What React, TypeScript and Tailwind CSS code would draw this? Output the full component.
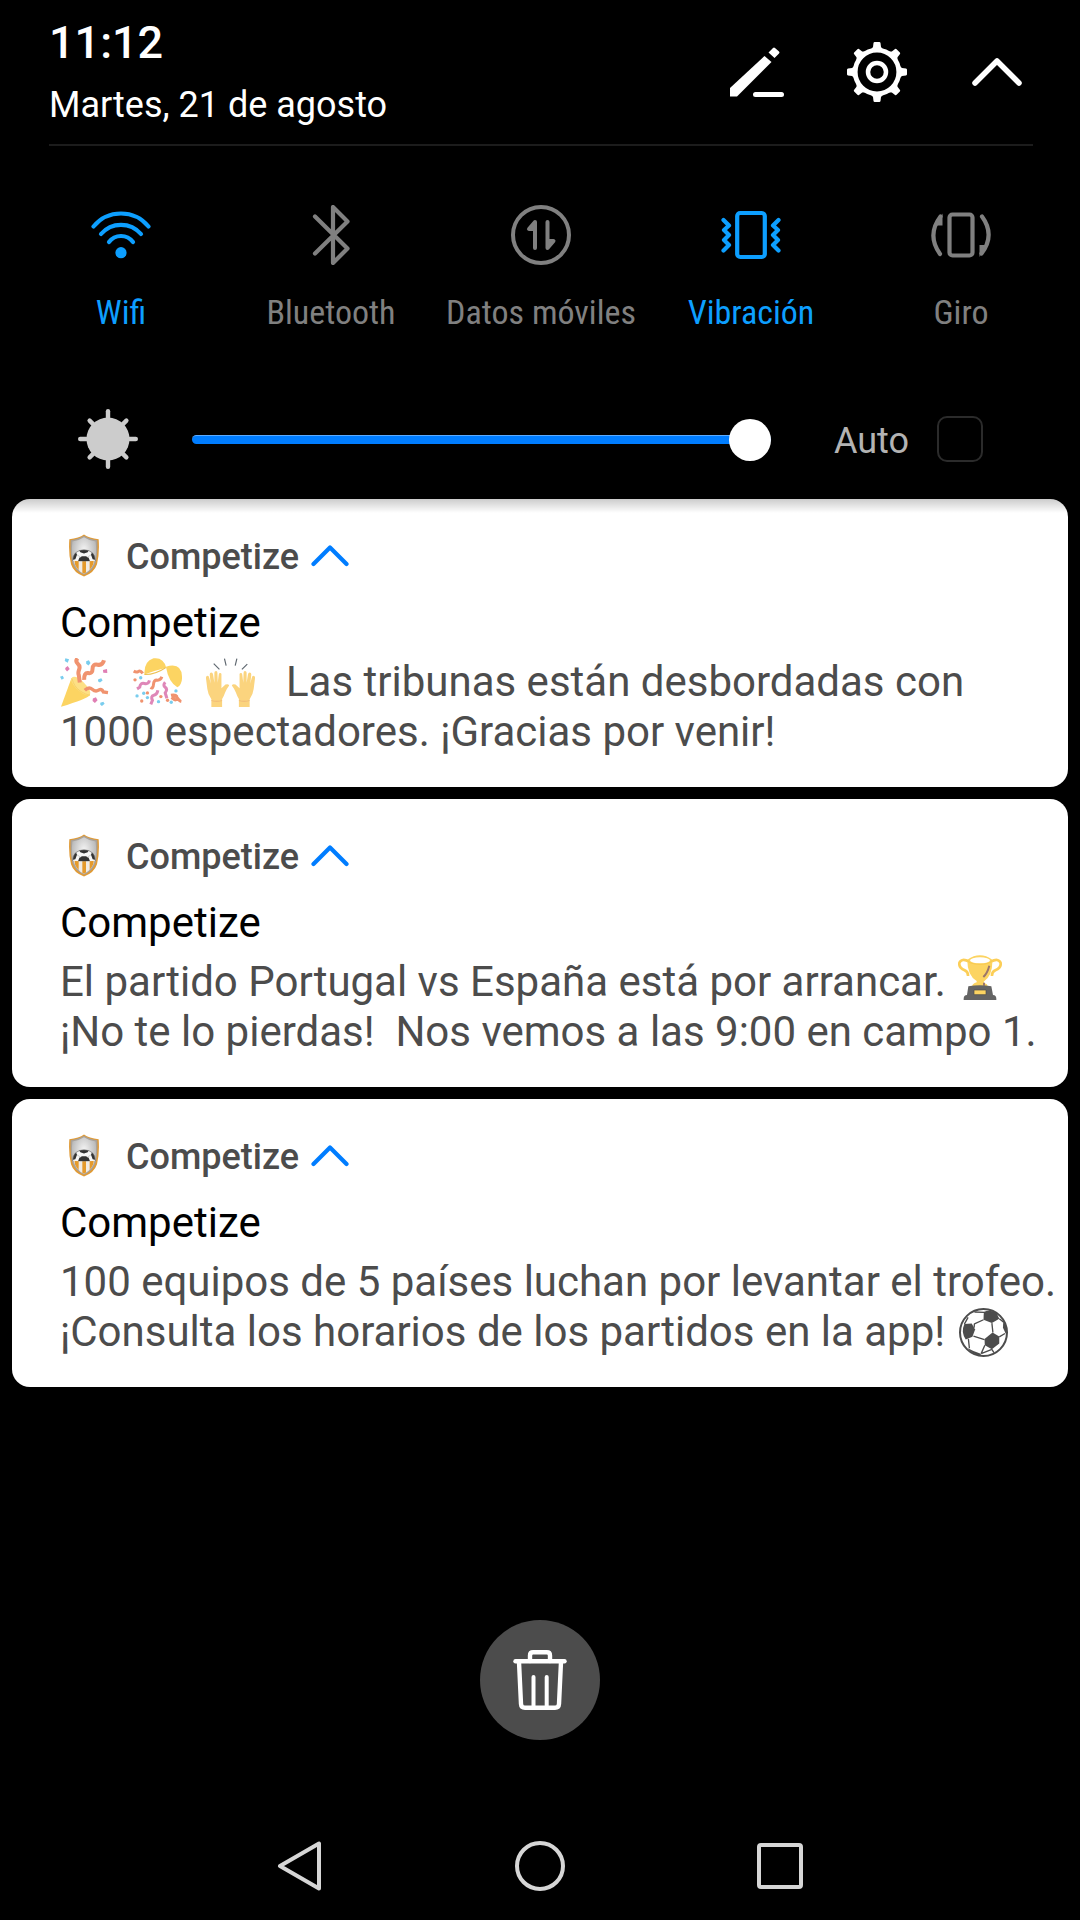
import type { ReactNode } from "react";

const TEETH = [0, 45, 90, 135, 180, 225, 270, 315];

const PencilIcon = () => (
  <svg viewBox="0 0 60 60" className="size-[60px]" fill="currentColor">
    <path d="M3 48v-2L37.5 14l7 6L10 54.5H3z" />
    <path d="M41.5 10.5l4.500-4.500q1-1 2 0l4 3.500q1 1 0 2l-4.500 4.500z" />
    <path d="M28.500 52.500H54.500" stroke="currentColor" strokeWidth="5" strokeLinecap="round" />
  </svg>
);

const GearIcon = () => (
  <svg viewBox="0 0 60 60" className="size-[60px]" fill="none" stroke="currentColor">
    <circle cx="30" cy="30" r="21.800" strokeWidth="4.800" />
    <circle cx="30" cy="30" r="9" strokeWidth="4.500" />
    {TEETH.map((a) => (
      <path
        key={a}
        d="M23 8.500L26 5l.500-4q.200-1 1.200-1h4.600q1 0 1.200 1l.500 4 3 3.500z"
        fill="currentColor"
        stroke="none"
        transform={`rotate(${a} 30 30)`}
      />
    ))}
  </svg>
);

const CollapseIcon = () => (
  <svg viewBox="0 0 60 60" className="size-[60px]" fill="none" stroke="currentColor" strokeWidth="5.500" strokeLinecap="round" strokeLinejoin="round">
    <path d="M8 41L30 19l22 22" />
  </svg>
);

const WifiIcon = () => (
  <svg viewBox="0 0 60 60" className="size-[60px]" fill="none" stroke="currentColor" strokeWidth="4.200" strokeLinecap="round">
    <path d="M2.500 21.500a35.600 35.600 0 0 1 55 0" />
    <path d="M10 29a26.300 26.300 0 0 1 40 0" />
    <path d="M18 37a15 15 0 0 1 24 0" />
    <circle cx="30" cy="47.700" r="5.600" fill="currentColor" stroke="none" />
  </svg>
);

const BluetoothIcon = () => (
  <svg viewBox="0 0 60 60" className="size-[60px]" fill="none" stroke="currentColor" strokeWidth="4.200" strokeLinecap="round" strokeLinejoin="round">
    <path d="M14 11.500L46.500 43.500 32 58V2l14.500 14.500L14 48.500" />
  </svg>
);

const DataIcon = () => (
  <svg viewBox="0 0 60 60" className="size-[60px]" fill="none" stroke="currentColor" strokeWidth="4" strokeLinecap="round" strokeLinejoin="round">
    <circle cx="30" cy="30" r="28" />
    <path d="M24 43V17l-6 7h6" fill="currentColor" />
    <path d="M36.500 17v26l6-7h-6" fill="currentColor" />
  </svg>
);

const VibrateIcon = () => (
  <svg viewBox="0 0 60 60" className="size-[60px]" fill="none" stroke="currentColor" strokeWidth="4.200" strokeLinecap="round" strokeLinejoin="round">
    <rect x="16.200" y="8" width="27.600" height="44" rx="3" />
    <path d="M2.500 15l5.500 5.500L3 25l5 5-5 5 5 5-5.500 5.500" />
    <path d="M57.500 15L52 20.500l5 4.500-5 5 5 5-5 5 5.500 5.500" />
  </svg>
);

const RotateIcon = () => (
  <svg viewBox="0 0 60 60" className="size-[60px]" fill="none" stroke="currentColor" strokeWidth="4.200" strokeLinecap="round" strokeLinejoin="round">
    <rect x="18.500" y="9.500" width="23" height="41" rx="3" />
    <path d="M9.500 11.500Q-4.500 30 9 49" />
    <path d="M51 11.500Q64.500 30 50.500 48.500" />
    <path d="M11.500 8.500v12H4.500z" fill="currentColor" stroke="none" />
    <path d="M48.500 52V40h7z" fill="currentColor" stroke="none" />
  </svg>
);

const SunIcon = () => (
  <svg viewBox="0 0 60 60" className="size-[60px] shrink-0 text-[#cccccc]" fill="currentColor">
    <circle cx="30" cy="30" r="21.500" />
    {TEETH.map((a) => (
      <path
        key={a}
        d={a % 90 ? "M30 10V4" : "M30 10V2.200"}
        stroke="currentColor"
        strokeWidth="4.400"
        strokeLinecap="round"
        transform={`rotate(${a} 30 30)`}
      />
    ))}
  </svg>
);

const TrashIcon = () => (
  <svg viewBox="0 0 60 60" className="size-[60px]" fill="none" stroke="currentColor" strokeWidth="4.400" strokeLinecap="round" strokeLinejoin="round">
    <path d="M5.500 11.200h49" />
    <path d="M20 11V5.500q0-3.200 3.200-3.200h13.600q3.200 0 3.200 3.200V11" />
    <path d="M9 12l2 42q.200 3.800 4 3.800h30q3.800 0 4-3.800l2-42" />
    <path d="M23.500 27v30M36.700 27v30" strokeWidth="4" />
  </svg>
);

const ShieldLogo = () => (
  <svg viewBox="0 0 90 128" className="mb-1 h-[43px] w-[30px]">
    <defs>
      <radialGradient id="steel" cx="50%" cy="35%" r="60%">
        <stop offset="0%" stopColor="#f4f4f4" />
        <stop offset="100%" stopColor="#b0b0b0" />
      </radialGradient>
      <clipPath id="stripes">
        <path d="M13 76H77Q72 106 45 119Q20 108 13 76z" />
      </clipPath>
      <clipPath id="ball">
        <path d="M11 80Q12 48 45 47Q78 48 79 80Q45 84 11 80z" />
      </clipPath>
    </defs>
    <path d="M45 1Q60 12 89 15Q92 60 84 90Q76 115 45 127Q14 115 6 90Q-2 60 1 15Q30 12 45 1z" fill="#e09a35" />
    <path d="M45 5Q61 15 85 18Q87 62 79 88Q72 110 45 122Q18 110 11 88Q3 62 5 18Q29 15 45 5z" fill="#a9a29a" />
    <path d="M45 9Q60 19 80 22Q84 60 76 86Q69 108 45 119Q21 108 14 86Q6 60 10 22Q30 19 45 9z" fill="url(#steel)" />
    <g clipPath="url(#stripes)">
      <path d="M8 76h76v50H8z" fill="#f1ebe4" />
      <path d="M17 76h12v50H17zM40 76h11v50H40zM62 76h12v50H62z" fill="#e59a2b" />
    </g>
    <g clipPath="url(#ball)">
      <path d="M8 44h74v42H8z" fill="#f7f7f7" />
      <path d="M28 44h34l-6 10-11 4-11-4z" fill="#333" />
      <path d="M8 56l13-2 3 8-5 13-11 3zM82 56l-13-2-3 8 5 13 11 3z" fill="#333" />
      <path d="M31 71l8-5h12l8 5 5 13H26z" fill="#333" />
      <path d="M24 62l11 7M66 62l-11 7" stroke="#bbb" strokeWidth="2" />
    </g>
    <path d="M11 80Q12 48 45 47Q78 48 79 80" fill="none" stroke="#666" strokeWidth="2" />
  </svg>
);

const ChevronUp = () => (
  <svg viewBox="0 0 38 24" className="mb-[2px] h-6 w-[38px] text-[#007dff]" fill="none" stroke="currentColor" strokeWidth="4.200" strokeLinecap="round" strokeLinejoin="round">
    <path d="M2.500 20L19 3.500 35.500 20" />
  </svg>
);

const PartyPopper = () => (
  <svg viewBox="0 0 146 146" className="size-[49px]" role="img" aria-label="Cañón de confeti">
    <path d="M3 145L34 60Q70 75 90 110Q80 122 3 145z" fill="#fcd462" />
    <path d="M34 60Q44 47 70 72Q98 100 88 111Q70 112 48 90Q30 70 34 60z" fill="#fde085" />
    <path d="M36 62Q42 86 60 98T89 110" stroke="#f3cb5c" strokeWidth="2" fill="none" />
    <g fill="none" stroke="#f0936f" strokeWidth="12">
      <path d="M52 1q-7 9 1 16t4 17-1 17l3 22" />
      <path d="M131 7q-4 16-19 13t-15 12-13 13-12 20" />
      <path d="M74 96q12-12 22-3t19 3 14 5l14 2" strokeWidth="10" />
    </g>
    <g fill="#79cdee">
      <path d="M16 1l11 3-4 10-9-5zM78 10l8-3 5 8-6 7-7-5zM0 56l8-3 4 7-7 5zM114 63l9-3 4 7-8 6-6-4zM120 133l9-3 4 6-8 7-5-4z" />
    </g>
    <g fill="#e07fb4">
      <path d="M17 28l6-4 6 9-8 7-6-7zM128 36l12-3 1 12-12-1zM98 121l9-4 5 9-8 8-7-6z" />
    </g>
  </svg>
);

const ConfettiBall = () => (
  <svg viewBox="0 0 146 146" className="size-[49px]" role="img" aria-label="Bola de confeti">
    <path d="M34 49Q32 10 61 1Q91-3 99 29Q66 37 34 49z" fill="#fcd462" />
    <path d="M98 26Q144 12 146 55Q147 79 132 87Q106 72 98 26z" fill="#fcd462" />
    <path d="M34 49Q66 50 97 29" stroke="#ecc154" strokeWidth="3" fill="none" />
    <g fill="none" stroke="#f0936f" strokeWidth="9">
      <path d="M2 39q8 5 14 1t13 6" />
      <path d="M86 56q-4 11-14 10t-11 13-9 9" />
      <path d="M113 111q19-3 18 8t-13 1q7-11 14-1t12 11" />
    </g>
    <g fill="none" stroke="#df87b8" strokeWidth="9">
      <path d="M49 67q-3 12-15 9t-14 11l-8 5" />
      <path d="M96 72q-8 9 0 15t0 17l5 16" />
      <path d="M74 96q-2 13-12 15t-4 15l-5 12" />
    </g>
    <g fill="#79cdee">
      <circle cx="23" cy="59" r="5" /><circle cx="32" cy="105" r="5" /><circle cx="12" cy="113" r="5" />
      <circle cx="128" cy="98" r="5" /><circle cx="76" cy="130" r="5" /><circle cx="114" cy="132" r="5" />
      <circle cx="43" cy="118" r="5" />
    </g>
    <g fill="#f0936f">
      <circle cx="6" cy="65" r="5" /><circle cx="26" cy="128" r="5" /><circle cx="43" cy="104" r="5" />
      <circle cx="83" cy="115" r="5" /><circle cx="103" cy="126" r="5" />
    </g>
  </svg>
);

// One palm; the right hand reuses it mirrored.
const Palm = () => (
  <g>
    <path
      d="M16 146V123Q6 109 4 92L0 61Q-1 54 4 53Q9 53 10 60L14 76 11 49Q11 43 16 43Q20 43 21 49L25 74V44Q25 39 30 39Q34 40 34 44L35 74 38 49Q39 44 43 45Q47 46 46 50L46 90 58 79Q67 76 69 82Q62 91 57 103Q53 115 48 122V146z"
      fill="#fbd47e"
    />
    <path d="M16 127q16 4 32 0" fill="none" stroke="#efb878" strokeWidth="3" />
  </g>
);

const RaisedHands = () => (
  <svg viewBox="0 0 146 146" className="size-[49px]" role="img" aria-label="Manos levantadas">
    <Palm />
    <g transform="translate(146 0) scale(-1 1)"><Palm /></g>
    <path d="M23 17l17 17M55 2l5 21M92 2l-5 21M123 18l-16 16" stroke="#5f6870" strokeWidth="3.500" fill="none" />
  </svg>
);

const Trophy = () => (
  <svg viewBox="0 0 132 138" className="mb-2 h-[46px] w-11" role="img" aria-label="Trofeo">
    <g fill="none" stroke="#fcce57" strokeWidth="8">
      <path d="M34 20Q10 8 4 24Q2 38 20 46Q31 51 30 63" />
      <path d="M98 20Q122 8 128 24Q130 38 112 46Q101 51 102 63" />
    </g>
    <path d="M28 14Q66-12 103 14Q105 62 77 80L79 84Q92 89 88 96H43Q40 88 56 82V78Q27 60 28 14z" fill="#fcd462" />
    <ellipse cx="66" cy="16" rx="30" ry="9" fill="#fff" />
    <path d="M28 15Q31 27 66 28Q100 27 103 15" fill="none" stroke="#f9c94e" strokeWidth="3" />
    <path d="M94 32Q88 55 76 66M78 83v9" stroke="#9c766b" strokeWidth="6" fill="none" />
    <path d="M31 94Q66 87 100 94L105 120Q115 121 115 131V135H17V131Q17 121 27 120z" fill="#646464" />
    <path d="M48 105h36v14H48z" fill="#fcd462" stroke="#4b4b4b" strokeWidth="2" />
  </svg>
);

const SoccerBall = () => (
  <svg viewBox="0 0 146 146" className="size-[49px]" fill="none" stroke="#4c4c4c" role="img" aria-label="Balón">
    <circle cx="73" cy="73" r="70" strokeWidth="6" />
    <g fill="#4c4c4c" stroke="none">
      <path d="M74 12Q90 3 112 15L120 32 98 45 73 35z" />
      <path d="M16 48L38 46 48 64 40 86 20 94Q5 72 16 48z" />
      <path d="M100 73L120 85V106L98 123 77 111 76 92z" />
      <path d="M25 119L43 128 65 136V142Q42 140 25 119z" />
      <path d="M132 37Q142 52 143 72L139 76 131 59z" />
    </g>
    <path
      d="M73 35L46 47M98 45L101 73M45 59L46 46M43 84L76 94M120 32L133 42M120 86L137 76M28 92L31 120M77 111L66 136M66 136L98 123M98 123L104 133M16 48L27 28M46 12L76 13"
      strokeWidth="4"
    />
  </svg>
);

const tiles = [
  { label: "Wifi", icon: WifiIcon, active: true },
  { label: "Bluetooth", icon: BluetoothIcon, active: false },
  { label: "Datos móviles", icon: DataIcon, active: false },
  { label: "Vibración", icon: VibrateIcon, active: true },
  { label: "Giro", icon: RotateIcon, active: false },
];

const NotificationCard = ({ children }: { children: ReactNode }) => (
  <article className="rounded-[18px] bg-white pt-[38px] pr-1 pb-[30px] pl-12">
    <button className="flex h-10 items-center pl-[9px]">
      <ShieldLogo />
      <span className="mr-3 ml-[27px] text-[36px] leading-10 font-medium text-[#4c4c4c]">Competize</span>
      <ChevronUp />
    </button>
    <h2 className="mt-[22px] text-[42px] leading-[48px] text-black">Competize</h2>
    <div className="mt-[10px] text-[42px] leading-[50px] whitespace-nowrap text-[#4c4c4c]">{children}</div>
  </article>
);

const App = () => {
  return (
    <div className="flex min-h-screen flex-col bg-black font-[Roboto,sans-serif] text-white">
      <header className="mr-[47px] ml-[49px] flex items-start justify-between border-b-2 border-[#1c1c1c] pt-[19px] pb-[19px]">
        <div>
          <time className="block text-[45px] leading-12 font-medium">11:12</time>
          <p className="mt-[18px] text-[36px] leading-10">Martes, 21 de agosto</p>
        </div>
        <div className="mt-[23px] mr-[6px] flex gap-[60px]">
          <button aria-label="Editar"><PencilIcon /></button>
          <button aria-label="Ajustes"><GearIcon /></button>
          <button aria-label="Contraer"><CollapseIcon /></button>
        </div>
      </header>

      {/* Quick settings */}
      <section className="grid grid-cols-5 pt-[59px] pr-[14px] pl-4">
        {tiles.map(({ label, icon: Icon, active }) => (
          <button
            key={label}
            aria-pressed={active}
            className={`flex flex-col items-center gap-[27px] ${active ? "text-[#0d9fff]" : "text-[#808080]"}`}
          >
            <Icon />
            <span className="font-['Roboto_Condensed',Roboto,sans-serif] text-[34px] leading-10 whitespace-nowrap">
              {label}
            </span>
          </button>
        ))}
      </section>

      {/* Brightness */}
      <section className="mt-[77px] flex items-center pr-[97px] pl-[78px]">
        <SunIcon />
        <input
          type="range"
          aria-label="Brillo"
          min={0}
          max={100}
          defaultValue={100}
          className="ml-[54px] h-[42px] min-w-0 flex-1 appearance-none bg-transparent [&::-webkit-slider-runnable-track]:h-[9px] [&::-webkit-slider-runnable-track]:rounded-full [&::-webkit-slider-runnable-track]:border-t [&::-webkit-slider-runnable-track]:border-[#5cabff] [&::-webkit-slider-runnable-track]:bg-[#007dff] [&::-webkit-slider-thumb]:-mt-[17px] [&::-webkit-slider-thumb]:size-[42px] [&::-webkit-slider-thumb]:appearance-none [&::-webkit-slider-thumb]:rounded-full [&::-webkit-slider-thumb]:bg-white"
        />
        <label htmlFor="auto" className="ml-[63px] pt-1 text-[36px] leading-10 text-[#b3b3b3]">Auto</label>
        <input
          id="auto"
          type="checkbox"
          className="ml-7 size-[46px] shrink-0 appearance-none rounded-[10px] border-2 border-[#2b2b2b]"
        />
      </section>

      {/* Notifications */}
      <main className="relative mt-[30px] flex flex-col gap-3 px-3">
        <div className="pointer-events-none absolute inset-x-3 top-0 h-[14px] rounded-t-[18px] bg-linear-to-b from-black/20 to-transparent" />
        <NotificationCard>
          <p className="flex items-center">
            <span className="flex gap-6">
              <PartyPopper />
              <ConfettiBall />
              <RaisedHands />
            </span>
            <span className="ml-[31px]">Las tribunas están desbordadas con</span>
          </p>
          <p>1000 espectadores. ¡Gracias por venir!</p>
        </NotificationCard>
        <NotificationCard>
          <p className="flex h-[50px] items-center gap-3">
            El partido Portugal vs España está por arrancar.
            <Trophy />
          </p>
          <p>¡No te lo pierdas!&nbsp; Nos vemos a las 9:00 en campo 1.</p>
        </NotificationCard>
        <NotificationCard>
          <p>100 equipos de 5 países luchan por levantar el trofeo.</p>
          <p className="flex items-center gap-[14px]">
            ¡Consulta los horarios de los partidos en la app!
            <SoccerBall />
          </p>
        </NotificationCard>
      </main>

      <footer className="mt-auto flex flex-col items-center pb-[29px]">
        <button aria-label="Borrar todo" className="grid size-[120px] place-items-center rounded-full bg-[#4c4c4c]">
          <TrashIcon />
        </button>
        <nav className="mt-[101px] grid w-2/3 grid-cols-3 justify-items-center text-[#d6d6d6]">
          <button aria-label="Atrás">
            <svg viewBox="0 0 50 50" className="size-[50px]" fill="none" stroke="currentColor" strokeWidth="4" strokeLinejoin="round">
              <path d="M44 2.500v45L5 25z" />
            </svg>
          </button>
          <button aria-label="Inicio">
            <svg viewBox="0 0 50 50" className="size-[50px]" fill="none" stroke="currentColor" strokeWidth="4">
              <circle cx="25" cy="25" r="23" />
            </svg>
          </button>
          <button aria-label="Recientes">
            <svg viewBox="0 0 50 50" className="size-[50px]" fill="none" stroke="currentColor" strokeWidth="4">
              <rect x="4" y="4" width="42" height="42" rx="2" />
            </svg>
          </button>
        </nav>
      </footer>
    </div>
  );
};

export default App;
